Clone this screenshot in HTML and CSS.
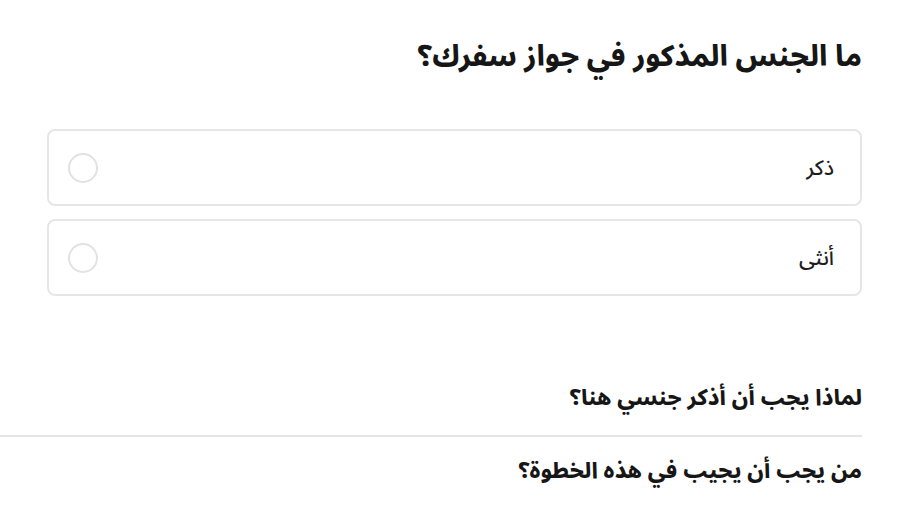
FILE: index.html
```html
<!DOCTYPE html>
<html lang="ar" dir="rtl">
<head>
<meta charset="utf-8">
<link rel="stylesheet" href="styles.css">
</head>
<body>
<div class="page">
  <h1 class="title">ما الجنس المذكور في جواز سفرك؟</h1>
  <div class="options">
    <label class="option"><span class="label">ذكر</span><span class="radio"></span></label>
    <label class="option"><span class="label">أنثى</span><span class="radio"></span></label>
  </div>
  <div class="faq">
    <div class="faq-item">لماذا يجب أن أذكر جنسي هنا؟</div>
    <div class="faq-item">من يجب أن يجيب في هذه الخطوة؟</div>
  </div>
</div>
</body>
</html>
```
FILE: styles.css
```css
html, body {
  margin: 0;
  padding: 0;
  background: #ffffff;
}
body {
  font-family: "Noto Sans Arabic", "DejaVu Sans", sans-serif;
  color: #1a1a1a;
}
.page {
  margin-right: 38px;
  display: flex;
  flex-direction: column;
}
.title {
  margin: 29px 0 0 0;
  font-size: 29px;
  font-weight: 800;
  line-height: 56px;
  text-align: right;
  color: #161616;
}
.options {
  margin: 44px 0 0 47px;
  display: flex;
  flex-direction: column;
  gap: 13px;
}
.option {
  height: 77px;
  border: 2px solid #e6e6e6;
  border-radius: 8px;
  display: flex;
  align-items: center;
  justify-content: space-between;
  padding: 0 26px 0 19px;
  box-sizing: border-box;
}
.label {
  font-size: 21px;
  font-weight: 500;
  color: #1e1e1e;
}
.radio {
  width: 30px;
  height: 30px;
  border: 2px solid #e2e2e2;
  border-radius: 50%;
  box-sizing: border-box;
}
.faq {
  margin-top: 78px;
  display: flex;
  flex-direction: column;
}
.faq-item {
  font-size: 22px;
  font-weight: 800;
  line-height: 34px;
  padding: 7px 0 20px 0;
  text-align: right;
  color: #161616;
}
.faq-item + .faq-item {
  border-top: 2px solid #e4e4e4;
  padding-top: 17px;
}
```
